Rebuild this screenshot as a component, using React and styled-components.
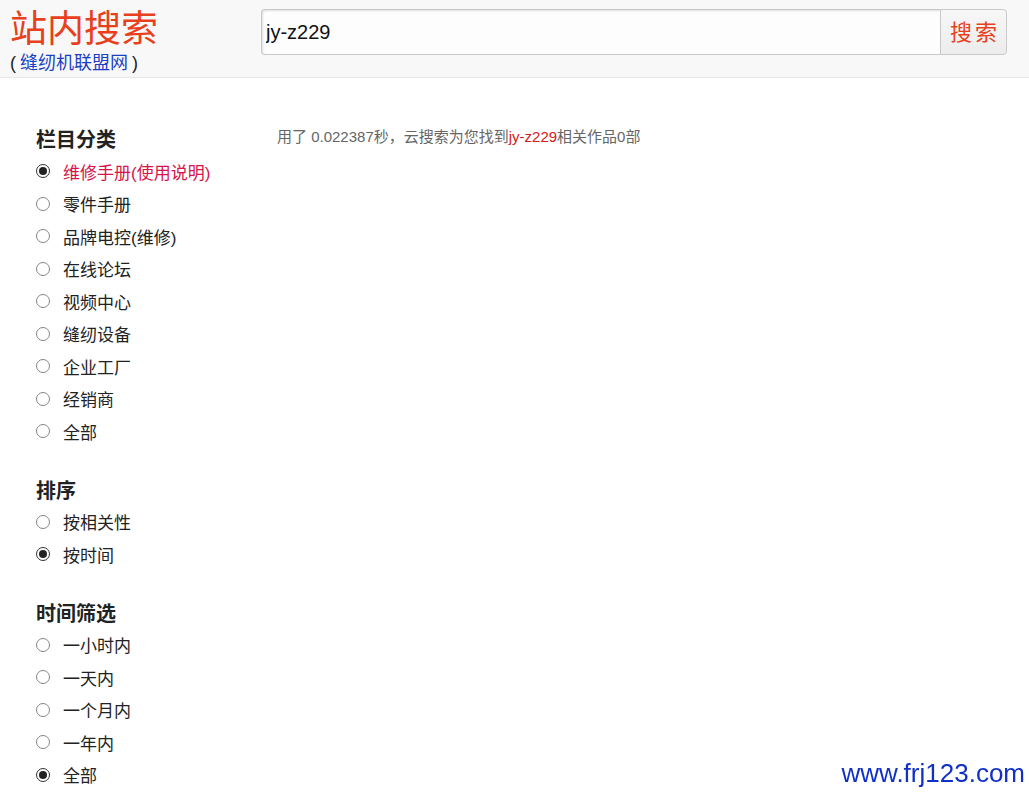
import React from 'react'
import styled, { createGlobalStyle } from 'styled-components'

const GlobalStyle = createGlobalStyle`
  html, body { margin: 0; padding: 0; background: #fff; }
  body { font-family: "Liberation Sans", "Noto Sans CJK SC", sans-serif; color: #222; }
`

const cjk = `"Liberation Sans", "Noto Sans CJK SC", sans-serif`

const Header = styled.header`
  height: 77px;
  background: #f8f8f8;
  border-bottom: 1px solid #e6e6e6;
  display: flex;
  align-items: flex-start;
`

const Brand = styled.div`
  width: 251px;
  padding: 8px 0 0 10px;
  box-sizing: border-box;
  font-family: ${cjk};
`

const Title = styled.div`
  font-size: 37px;
  line-height: 44px;
  color: #e8401c;
`

const Sub = styled.div`
  font-size: 18px;
  line-height: 20px;
  color: #222;
  margin-top: 1px;
  a { color: #1a3fc4; text-decoration: none; margin: 0 4px; }
`

const SearchBox = styled.form`
  display: flex;
  margin-top: 9px;
  margin-left: 10px;
  height: 46px;
`

const Input = styled.input`
  width: 679px;
  height: 46px;
  box-sizing: border-box;
  border: 1px solid #c8c8c8;
  border-right: none;
  border-radius: 4px 0 0 4px;
  background: #fdfdfd;
  box-shadow: inset 1px 1px 2px rgba(0,0,0,0.12);
  padding: 0 4px;
  font-family: "Liberation Sans", Arial, sans-serif;
  font-size: 20px;
  color: #111;
  outline: none;
`

const Button = styled.button`
  width: 67px;
  height: 46px;
  box-sizing: border-box;
  border: 1px solid #c8c8c8;
  border-radius: 0 4px 4px 0;
  background: linear-gradient(#f7f7f7, #ececec);
  color: #e8401c;
  font-family: ${cjk};
  font-size: 22px;
  letter-spacing: 3px;
  padding: 0 0 5px 3px;
  cursor: pointer;
`

const Main = styled.div`
  display: flex;
  padding-top: 47px;
`

const Sidebar = styled.aside`
  width: 277px;
  padding-left: 36px;
  box-sizing: border-box;
  font-family: ${cjk};
`

const Group = styled.section`
  & + & { margin-top: 28px; }
`

const Heading = styled.h3`
  margin: 0;
  font-size: 20px;
  font-weight: bold;
  line-height: 30px;
  color: #222;
`

const Option = styled.label`
  display: flex;
  align-items: center;
  height: 32.5px;
  font-size: 17px;
  color: ${p => (p.$active ? '#d4144a' : '#222')};
  cursor: pointer;
`

const Radio = styled.input.attrs({ type: 'radio' })`
  appearance: none;
  margin: 0 13px 0 0;
  width: 14px;
  height: 14px;
  box-sizing: border-box;
  border: 1px solid #858585;
  border-radius: 50%;
  background: #fff;
  display: grid;
  place-items: center;
  &:checked { border-color: #333; }
  &:checked::after {
    content: '';
    width: 8px;
    height: 8px;
    border-radius: 50%;
    background: #222;
  }
`

const Result = styled.div`
  padding-top: 2px;
  font-family: ${cjk};
  font-size: 15px;
  line-height: 20px;
  color: #666;
  em { font-style: normal; color: #d41a1a; }
`

const Watermark = styled.div`
  position: fixed;
  right: 4px;
  bottom: 4px;
  font-family: "Liberation Sans", Arial, sans-serif;
  font-size: 26px;
  color: #1030c8;
`

const groups = [
  {
    title: '栏目分类', name: 'cat', checked: 0, highlight: true,
    items: ['维修手册(使用说明)', '零件手册', '品牌电控(维修)', '在线论坛', '视频中心', '缝纫设备', '企业工厂', '经销商', '全部'],
  },
  { title: '排序', name: 'sort', checked: 1, items: ['按相关性', '按时间'] },
  { title: '时间筛选', name: 'time', checked: 4, items: ['一小时内', '一天内', '一个月内', '一年内', '全部'] },
]

export default function App() {
  return (
    <>
      <GlobalStyle />
      <Header>
        <Brand>
          <Title>站内搜索</Title>
          <Sub>(<a href="#">缝纫机联盟网</a>)</Sub>
        </Brand>
        <SearchBox onSubmit={e => e.preventDefault()}>
          <Input defaultValue="jy-z229" />
          <Button type="submit">搜索</Button>
        </SearchBox>
      </Header>
      <Main>
        <Sidebar>
          {groups.map(g => (
            <Group key={g.name}>
              <Heading>{g.title}</Heading>
              {g.items.map((it, i) => (
                <Option key={it} $active={g.highlight && i === g.checked}>
                  <Radio name={g.name} defaultChecked={i === g.checked} />
                  {it}
                </Option>
              ))}
            </Group>
          ))}
        </Sidebar>
        <Result>
          用了 0.022387秒，云搜索为您找到<em>jy-z229</em>相关作品0部
        </Result>
      </Main>
      <Watermark>www.frj123.com</Watermark>
    </>
  )
}
